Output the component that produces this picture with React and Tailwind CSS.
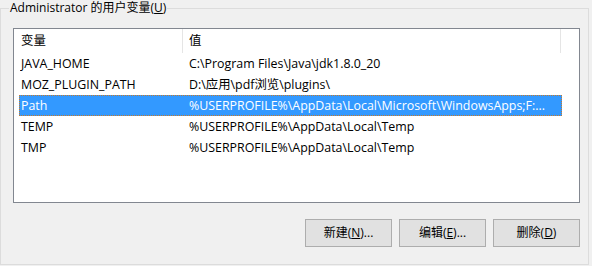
const rows = [
  { name: 'JAVA_HOME', value: 'C:\\Program Files\\Java\\jdk1.8.0_20' },
  { name: 'MOZ_PLUGIN_PATH', value: 'D:\\应用\\pdf浏览\\plugins\\' },
  { name: 'Path', value: '%USERPROFILE%\\AppData\\Local\\Microsoft\\WindowsApps;F:...', selected: true },
  { name: 'TEMP', value: '%USERPROFILE%\\AppData\\Local\\Temp' },
  { name: 'TMP', value: '%USERPROFILE%\\AppData\\Local\\Temp' },
];

const Btn = ({ label, k, tail }) => (
  <button className="w-[87px] h-[28px] bg-[#e1e1e1] border border-[#adadad] text-[12px] text-black flex items-center justify-center">
    {label}(<span className="underline">{k}</span>){tail}
  </button>
);

export default function App() {
  return (
    <div
      className="w-[592px] h-[266px] bg-[#f0f0f0] text-black text-[12px] leading-[16px]"
      style={{ fontFamily: '"Open Sans", "Noto Sans CJK SC", sans-serif' }}
    >
      <fieldset className="w-[589px] h-[265px] border border-[#dcdcdc] flex flex-col">
        <legend className="ml-[8px] px-[1px] leading-[16px]">
          Administrator 的用户变量(<span className="underline">U</span>)
        </legend>
        <div className="mt-[12px] ml-[12px] w-[567px] h-[175px] bg-white border border-[#828790] flex flex-col text-[12.4px]">
          <div className="flex h-[24px] items-center shrink-0">
            <div className="w-[169px] h-full pl-[7px] flex items-center border-r border-[#e5e5e5]">变量</div>
            <div className="w-[378px] h-full pl-[6px] flex items-center border-r border-[#e5e5e5]">值</div>
          </div>
          {rows.map((r) => (
            <div
              key={r.name}
              className={`ml-[5px] w-[543px] h-[21px] flex items-center border whitespace-nowrap overflow-hidden ${
                r.selected ? 'bg-[#3399ff] text-white border-dotted border-[#c77a2a]' : 'border-transparent'
              }`}
            >
              <div className="w-[168px] pl-[1px] shrink-0">{r.name}</div>
              <div className="pl-[1px]">{r.value}</div>
            </div>
          ))}
        </div>
        <div className="mt-[16px] mr-[8px] flex justify-end gap-[7px]">
          <Btn label="新建" k="N" tail="..." />
          <Btn label="编辑" k="E" tail="..." />
          <Btn label="删除" k="D" />
        </div>
      </fieldset>
    </div>
  );
}
